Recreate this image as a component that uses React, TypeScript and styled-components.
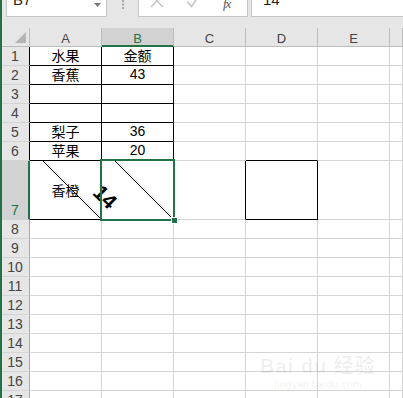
import styled, { createGlobalStyle } from "styled-components";

const GREEN = "#217346";
const GRID = "#d4d4d4";
const HEAD_LINE = "#bcbcbc";

const GlobalStyle = createGlobalStyle`
  html, body { margin: 0; padding: 0; background: #fff; overflow: hidden; }
  body { font-family: "Liberation Sans", "Noto Sans CJK SC", sans-serif; }
`;

const COLS = ["A", "B", "C", "D", "E", "F"];
const ROWS = [19, 19, 19, 19, 19, 19, 59, 19, 19, 19, 19, 19, 19, 19, 19, 19, 19];

const values: Record<string, string> = {
  A1: "水果",
  B1: "金额",
  A2: "香蕉",
  B2: "43",
  A5: "梨子",
  B5: "36",
  A6: "苹果",
  B6: "20",
  A7: "香橙",
};

const boxed = new Set(["A7", "B7", "D7"]);
for (let r = 1; r <= 6; r++) {
  boxed.add("A" + r);
  boxed.add("B" + r);
}
const blackRight = new Set(["C7"]);
const blackBottom = new Set(["D6"]);
const diagonal = new Set(["A7", "B7"]);

const Window = styled.div`
  width: 403px;
  height: 398px;
  overflow: hidden;
  border-left: 2px solid ${GREEN};
  box-sizing: border-box;
  background: #e6e6e6;
`;

const FormulaBar = styled.div`
  height: 28px;
  display: flex;
  align-items: flex-start;
  padding-left: 4px;
`;

const FieldBox = styled.div<{ $width: string; $gap: number }>`
  width: ${({ $width }) => $width};
  flex: ${({ $width }) => ($width === "auto" ? 1 : "none")};
  height: 27px;
  margin-top: -10px;
  margin-left: ${({ $gap }) => $gap}px;
  box-sizing: border-box;
  background: #fff;
  border: 1px solid #c6c6c6;
  border-right-width: ${({ $width }) => ($width === "auto" ? 0 : 1)}px;
  display: flex;
  align-items: flex-start;
  font-size: 15px;
  line-height: 17px;
  color: #222;
`;

const NameText = styled.span`
  padding-left: 6px;
  flex: 1;
`;

const DropArrow = styled.svg`
  margin: 12px 5px 0 0;
`;

const Dots = styled.svg`
  margin: 0 0 0 14px;
`;

const IconSlot = styled.div<{ $left: number }>`
  margin-left: ${({ $left }) => $left}px;
  margin-top: 2px;
  display: flex;
`;

const Fx = styled.span`
  margin-left: 22px;
  margin-top: 4px;
  font-family: "Liberation Serif", serif;
  font-style: italic;
  font-size: 13px;
  color: #555;
  letter-spacing: -1px;
`;

const FormulaText = styled.span`
  padding-left: 11px;
`;

const Sheet = styled.div`
  position: relative;
  display: grid;
  grid-template-columns: 28px repeat(5, 72px) 1fr;
  grid-template-rows: 19px ${ROWS.map((h) => h + "px").join(" ")};
  background: #fff;
`;

const Corner = styled.div`
  background: #e6e6e6;
  border-right: 1px solid ${HEAD_LINE};
  border-bottom: 1px solid ${HEAD_LINE};
  box-sizing: border-box;
  display: flex;
  align-items: flex-end;
  justify-content: flex-end;
  padding: 0 3px 3px 0;
`;

const ColHead = styled.div<{ $active?: boolean }>`
  background: ${({ $active }) => ($active ? "#d2d2d2" : "#e6e6e6")};
  color: ${({ $active }) => ($active ? GREEN : "#444")};
  border-right: 1px solid ${HEAD_LINE};
  border-bottom: ${({ $active }) => ($active ? `2px solid ${GREEN}` : `1px solid ${HEAD_LINE}`)};
  box-sizing: border-box;
  font-size: 13px;
  display: flex;
  align-items: center;
  justify-content: center;
  padding-top: 3px;
`;

const RowHead = styled.div<{ $active?: boolean; $edge?: string }>`
  background: ${({ $active }) => ($active ? "#d2d2d2" : "#e6e6e6")};
  color: ${({ $active }) => ($active ? GREEN : "#444")};
  border-bottom: 1px solid ${GRID};
  border-right: ${({ $active, $edge }) => ($active ? `2px solid ${GREEN}` : `1px solid ${$edge ?? "#ababab"}`)};
  box-sizing: border-box;
  font-size: 14px;
  display: flex;
  align-items: flex-end;
  justify-content: center;
  padding-right: ${({ $active }) => ($active ? 0 : 1)}px;
  padding-bottom: 1px;
`;

const Cell = styled.div<{ $right: string; $bottom: string; $middle?: boolean; $cjk?: boolean }>`
  position: relative;
  border-right: 1px solid ${({ $right }) => $right};
  border-bottom: 1px solid ${({ $bottom }) => $bottom};
  box-sizing: border-box;
  display: flex;
  justify-content: center;
  align-items: ${({ $middle }) => ($middle ? "center" : "flex-end")};
  padding-bottom: ${({ $middle }) => ($middle ? 0 : 1)}px;
  font-family: ${({ $cjk }) =>
    $cjk ? `"Noto Sans CJK SC", sans-serif` : `"Liberation Sans", "Noto Sans CJK SC", sans-serif`};
  font-size: 14px;
  line-height: 17px;
  color: #000;
`;

const Diagonal = styled.svg`
  position: absolute;
  left: 0;
  top: 0;
`;

const CellText = styled.span`
  position: relative;
`;

const Selection = styled.div`
  position: absolute;
  left: 98px;
  top: 131px;
  width: 75px;
  height: 62px;
  box-sizing: border-box;
  border: 2px solid ${GREEN};
  pointer-events: none;
`;

const FillHandle = styled.div`
  position: absolute;
  right: -5px;
  bottom: -5px;
  width: 5px;
  height: 5px;
  background: ${GREEN};
  border: 1px solid #fff;
`;

const RotatedValue = styled.span`
  position: absolute;
  left: 103px;
  top: 169px;
  transform: translate(-50%, -50%) rotate(45deg);
  font-family: "Liberation Sans", sans-serif;
  font-weight: bold;
  font-size: 21px;
  color: #000;
`;

const Watermark = styled.div`
  position: absolute;
  left: 258px;
  top: 322px;
  display: flex;
  flex-direction: column;
  align-items: center;
  color: rgba(0, 0, 0, 0.06);
  font-family: "Liberation Sans", "Noto Sans CJK SC", sans-serif;
  font-weight: bold;
  pointer-events: none;
`;

const MarkTitle = styled.span`
  font-size: 20px;
  letter-spacing: 1px;
`;

const MarkUrl = styled.span`
  font-size: 10px;
`;

function cellKey(col: string, row: number) {
  return col + row;
}

export default function App() {
  return (
    <>
      <GlobalStyle />
      <Window>
        <FormulaBar>
          <FieldBox $width="101px" $gap={0}>
            <NameText>B7</NameText>
            <DropArrow width="7" height="4" viewBox="0 0 7 4">
              <path d="M0 0h7L3.5 4z" fill="#777" />
            </DropArrow>
          </FieldBox>
          <Dots width="3" height="9" viewBox="0 0 3 9">
            <rect x="1" y="0" width="2" height="2" fill="#a6a6a6" />
            <rect x="1" y="3.5" width="2" height="2" fill="#a6a6a6" />
            <rect x="1" y="7" width="2" height="2" fill="#a6a6a6" />
          </Dots>
          <FieldBox $width="110px" $gap={14}>
            <IconSlot $left={11}>
              <svg width="14" height="15" viewBox="0 0 14 15">
                <path d="M1 2l12 12M13 2L1 14" stroke="#c4c4c4" strokeWidth="1.4" />
              </svg>
            </IconSlot>
            <IconSlot $left={22}>
              <svg width="15" height="15" viewBox="0 0 15 15">
                <path d="M1 8.5l4.5 5L14 1" stroke="#c4c4c4" strokeWidth="1.5" fill="none" />
              </svg>
            </IconSlot>
            <Fx>fx</Fx>
          </FieldBox>
          <FieldBox $width="auto" $gap={3}>
            <FormulaText>14</FormulaText>
          </FieldBox>
        </FormulaBar>

        <Sheet>
          <Corner>
            <svg width="11" height="11" viewBox="0 0 11 11">
              <path d="M11 0v11H0z" fill="#b4b4b4" />
            </svg>
          </Corner>
          {COLS.map((c) => (
            <ColHead key={c} $active={c === "B"}>
              {c === "F" ? "" : c}
            </ColHead>
          ))}
          {ROWS.map((_, i) => {
            const row = i + 1;
            return [
              <RowHead key={"h" + row} $active={row === 7} $edge={row <= 6 ? "#000" : undefined}>
                {row}
              </RowHead>,
              ...COLS.map((c) => {
                const k = cellKey(c, row);
                const right = boxed.has(k) || blackRight.has(k) ? "#000" : GRID;
                const bottom = boxed.has(k) || blackBottom.has(k) ? "#000" : GRID;
                const text = values[k];
                return (
                  <Cell
                    key={k}
                    $right={right}
                    $bottom={bottom}
                    $middle={row === 7}
                    $cjk={!!text && /[^\d]/.test(text)}
                  >
                    {diagonal.has(k) && (
                      <Diagonal width="71" height="58" viewBox="0 0 71 58">
                        <line x1="13" y1="0" x2="71" y2="58" stroke="#000" strokeWidth="1" />
                      </Diagonal>
                    )}
                    {text && <CellText>{text}</CellText>}
                  </Cell>
                );
              }),
            ];
          })}
          <RotatedValue>14</RotatedValue>
          <Selection>
            <FillHandle />
          </Selection>
          <Watermark>
            <MarkTitle>Bai du 经验</MarkTitle>
            <MarkUrl>jingyan.baidu.com</MarkUrl>
          </Watermark>
        </Sheet>
      </Window>
    </>
  );
}
